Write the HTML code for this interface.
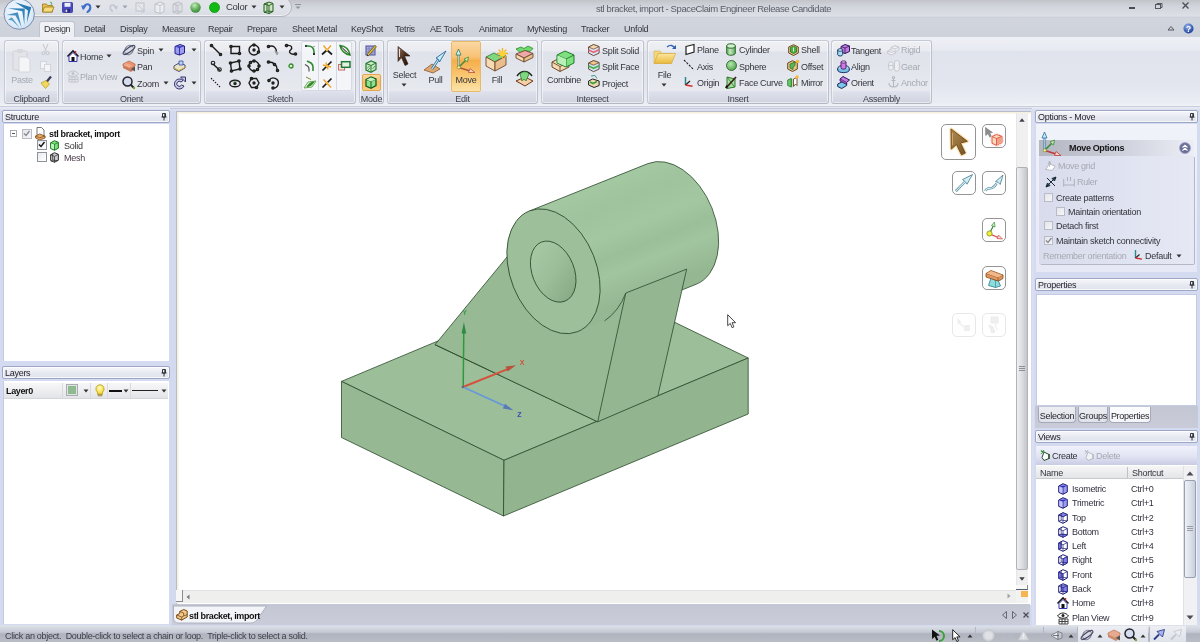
<!DOCTYPE html>
<html><head><meta charset="utf-8"><title>SpaceClaim</title>
<style>
*{box-sizing:border-box;margin:0;padding:0}
html,body{width:1200px;height:642px;overflow:hidden}
body{position:relative;background:#d5dbee;font-family:"Liberation Sans",sans-serif;font-size:9px;color:#2a2a2e}
.a{position:absolute}
svg{overflow:visible}
.t{position:absolute;white-space:nowrap;line-height:10px;font-size:9px;color:#33353c;letter-spacing:-0.28px}
.dis{color:#a6a9b2}
.b{font-weight:bold;letter-spacing:-0.37px}
.c{transform:translateX(-50%)}
.grp{position:absolute;top:40px;height:64px;border:1px solid #c6cad4;border-right-color:#bcc0ca;border-bottom-color:#b4b8c3;border-radius:3px;background:linear-gradient(#eef0f4,#e9ebf0 16%,#dfe2ea 18%,#e7e9ef 80%,#dfe2ec 81%,#cfd3df);box-shadow:inset 0 0 0 1px rgba(255,255,255,.5)}
.ph{position:absolute;height:14px;border:1px solid #9fa7c6;border-radius:2px;background:linear-gradient(#f6f7fb,#e6e8f1 60%,#dfe2ec);box-shadow:inset 0 0 0 1px rgba(255,255,255,.7)}

#app{position:absolute;left:0;top:0;width:1200px;height:642px;overflow:hidden;will-change:transform}

</style></head><body>
<div id="app">
<div class="a" style="left:0px;top:0px;width:1200px;height:18px;background:linear-gradient(#c2c4ca,#d1d4da 35%,#dddfe6 88%,#c8ccd5)"></div>
<div class="a" style="left:0px;top:18px;width:1200px;height:20px;background:linear-gradient(#d1d5de,#cdd1da)"></div>
<div class="a" style="left:22px;top:-3px;width:270px;height:19.5px;border:1px solid #b4b7c0;border-radius:10px;background:linear-gradient(#e2e4e9,#e0e3e9 55%,#d9dce3);box-shadow:inset 0 -1px 0 rgba(255,255,255,.6)"></div>
<svg class="a" style="left:3px;top:-2px" width="32" height="32" viewBox="0 0 32 32"><defs><radialGradient id="lg" cx="45%" cy="40%" r="65%"><stop offset="0" stop-color="#f4f9ff"/><stop offset=".7" stop-color="#dfecf9"/><stop offset="1" stop-color="#c4dcf2"/></radialGradient></defs>
<circle cx="16.200" cy="16.100" r="15.200" fill="url(#lg)" stroke="#7f8ead" stroke-width="1"/>
<path d="M12 4.200L28.200 9.300L23.800 25L25 12.500z" fill="#2878b2"/>
<path d="M5 10.300L21.800 10.600L21.300 27L19.300 13.200z" fill="#3484ba"/>
<path d="M3.500 17L14.800 14.300L18.500 29L12.500 17.500z" fill="#4590c2"/>
<path d="M5 21.800L8.800 19.300L16.500 29.500L9 22.500z" fill="#5a9cc8"/></svg>
<svg class="a" style="left:42px;top:1px" width="12" height="12" viewBox="0 0 12 12"><path d="M0.5 3h4l1 1.5h5v6.5h-10z" fill="#e8c24e" stroke="#9a7a1c" stroke-width=".8"/><path d="M0.5 11l2-5h9.5l-2 5z" fill="#f6dc7c" stroke="#9a7a1c" stroke-width=".8"/><path d="M8 1l2 1-1 2" stroke="#5a7" fill="none"/></svg>
<svg class="a" style="left:62px;top:2px" width="11" height="11" viewBox="0 0 11 11"><rect x=".5" y=".5" width="10" height="10" rx=".8" fill="#4848c0" stroke="#34349a" stroke-width=".8"/><rect x="2.500" y=".8" width="6" height="4" fill="#eef0fa"/><rect x="3" y="7" width="5" height="3.500" fill="#2a2a7a"/><rect x="3.600" y="7.600" width="1.600" height="2.500" fill="#e4e6f4"/></svg>
<svg class="a" style="left:81px;top:2px" width="11" height="11" viewBox="0 0 11 11"><path d="M3 5.500C3.500 1.500 9 1 9.300 5C9.500 7.500 8 9 6.500 10" fill="none" stroke="#3d6fd0" stroke-width="2.100" stroke-linecap="round"/><path d="M0 3.500l5.500 .3-3.500 4.500z" fill="#3d6fd0"/></svg>
<svg class="a" style="left:95px;top:5px" width="6" height="4" viewBox="0 0 6 4"><path d="M0.5 0.5h5l-2.5 3z" fill="#333"/></svg>
<svg class="a" style="left:108px;top:3px" width="10" height="9" viewBox="0 0 10 9"><path d="M7.500 4.500C7 1.500 2.500 1 2.200 4.200C2 6 3 7.200 4.200 8" fill="none" stroke="#c3c6ce" stroke-width="1.700" stroke-linecap="round"/><path d="M10 3l-4.500 .3 3 3.700z" fill="#c3c6ce"/></svg>
<svg class="a" style="left:122px;top:5px" width="6" height="4" viewBox="0 0 6 4"><path d="M0.5 0.5h5l-2.5 3z" fill="#a0a3ab"/></svg>
<svg class="a" style="left:135px;top:2px" width="11" height="11" viewBox="0 0 11 11"><rect x="1" y="1" width="8" height="8" fill="#e4e6ea" stroke="#bfc2c9"/><path d="M3 3l6 6M9 7v3h-3" stroke="#c5c8cf" fill="none"/></svg>
<svg class="a" style="left:154px;top:1px" width="11" height="13" viewBox="0 0 11 13"><path d="M1 3l5-2 4 1.5v8l-4 2-5-1.5z" fill="#ecedf0" stroke="#b5b8bf" stroke-width=".8"/><path d="M6 4.5v8M1 3l5 1.5 4-2" stroke="#b5b8bf" stroke-width=".7" fill="none"/></svg>
<svg class="a" style="left:172px;top:1px" width="11" height="13" viewBox="0 0 11 13"><path d="M1 3l5-2 4 1.5v8l-4 2-5-1.5z" fill="#dfe1e5" stroke="#b5b8bf" stroke-width=".8"/><path d="M6 4.5v8M1 3l5 1.5 4-2M4 2v8l-3 1.5M4 10l6 .5" stroke="#b5b8bf" stroke-width=".7" fill="none"/></svg>
<svg class="a" style="left:190px;top:2px" width="11" height="11" viewBox="0 0 11 11"><defs><radialGradient id="gs" cx="40%" cy="30%" r="70%"><stop offset="0" stop-color="#c8eac4"/><stop offset=".5" stop-color="#6fb868"/><stop offset="1" stop-color="#3b8a3a"/></radialGradient></defs><circle cx="5.5" cy="5.5" r="5.2" fill="url(#gs)"/></svg>
<svg class="a" style="left:209px;top:2px" width="11" height="11" viewBox="0 0 11 11"><circle cx="5.5" cy="5.5" r="5.2" fill="#14b914"/><circle cx="5.5" cy="5.5" r="4.9" fill="none" stroke="#0c9a10" stroke-width=".7"/></svg>
<div class="t " style="left:226px;top:2px;font-size:9.5px;color:#33353b">Color</div>
<svg class="a" style="left:251px;top:5px" width="6" height="4" viewBox="0 0 6 4"><path d="M0.5 0.5h5l-2.5 3z" fill="#333"/></svg>
<svg class="a" style="left:263px;top:1px" width="11" height="13" viewBox="0 0 11 13"><path d="M1 3l5-2 4 1.5v8l-4 2-5-1.5z" fill="#cfe6c4" stroke="#1f5a1c" stroke-width="1"/><path d="M6 4.5v8M1 3l5 1.5 4-2M4 2v8l-3 1.5M4 10l6 .5" stroke="#1f5a1c" stroke-width=".9" fill="none"/></svg>
<svg class="a" style="left:279px;top:5px" width="6" height="4" viewBox="0 0 6 4"><path d="M0.5 0.5h5l-2.5 3z" fill="#333"/></svg>
<svg class="a" style="left:295px;top:4px" width="6" height="6" viewBox="0 0 6 6"><path d="M0 .5h6" stroke="#8f939c" stroke-width="1"/><path d="M.5 2.5h5l-2.5 2.5z" fill="#8f939c"/></svg>
<div class="t " style="left:596px;top:4px;font-size:9.500px;letter-spacing:-0.4px;color:#5a5d68">stl bracket, import - SpaceClaim Engineer Release Candidate</div>
<div class="a" style="left:1129px;top:7px;width:6px;height:2px;background:#4a4d57"></div>
<svg class="a" style="left:1155px;top:3px" width="8" height="7" viewBox="0 0 8 7"><rect x=".5" y="1.5" width="5" height="4" fill="none" stroke="#555862"/><path d="M2 1.5v-1h5v4h-1" fill="none" stroke="#555862"/></svg>
<svg class="a" style="left:1182px;top:2px" width="7" height="7" viewBox="0 0 7 7"><path d="M.5 .5l6 6M6.500 .5l-6 6" stroke="#4a4d57" stroke-width="1.3"/></svg>
<svg class="a" style="left:1167px;top:25px" width="8" height="6" viewBox="0 0 8 6"><path d="M1 5l3-3.500 3 3.500z" fill="none" stroke="#55585f" stroke-width="1"/></svg>
<svg class="a" style="left:1183px;top:23px" width="11" height="11" viewBox="0 0 11 11"><defs><radialGradient id="hg" cx="40%" cy="30%" r="70%"><stop offset="0" stop-color="#8fb2ee"/><stop offset="1" stop-color="#1d3f9d"/></radialGradient></defs><circle cx="5.500" cy="5.500" r="5" fill="url(#hg)"/><text x="5.500" y="8.600" font-size="8.500" font-weight="bold" fill="#fff" text-anchor="middle" font-family="Liberation Sans, sans-serif">?</text></svg>
<div class="a" style="left:39px;top:21px;width:36px;height:18px;border:1px solid #c0c4ce;border-bottom:none;border-radius:3px 3px 0 0;background:linear-gradient(#f1f2f6,#eceef3)"></div>
<div class="t " style="left:44px;top:24px;color:#34363d">Design</div>
<div class="t " style="left:84px;top:24px;color:#34363d">Detail</div>
<div class="t " style="left:120px;top:24px;color:#34363d">Display</div>
<div class="t " style="left:162px;top:24px;color:#34363d">Measure</div>
<div class="t " style="left:208px;top:24px;color:#34363d">Repair</div>
<div class="t " style="left:247px;top:24px;color:#34363d">Prepare</div>
<div class="t " style="left:292px;top:24px;color:#34363d">Sheet Metal</div>
<div class="t " style="left:351px;top:24px;color:#34363d">KeyShot</div>
<div class="t " style="left:395px;top:24px;color:#34363d">Tetris</div>
<div class="t " style="left:430px;top:24px;color:#34363d">AE Tools</div>
<div class="t " style="left:479px;top:24px;color:#34363d">Animator</div>
<div class="t " style="left:527px;top:24px;color:#34363d">MyNesting</div>
<div class="t " style="left:581px;top:24px;color:#34363d">Tracker</div>
<div class="t " style="left:624px;top:24px;color:#34363d">Unfold</div>
<div class="a" style="left:0px;top:37px;width:1200px;height:69px;background:linear-gradient(#eef0f5,#e7eaf1 19%,#dfe3ec 21%,#e3e6ef 70%,#eaedf4 96%,#f2f4f8)"></div>
<div class="a" style="left:0px;top:106px;width:1200px;height:1px;background:#c9cdd9"></div>
<div class="grp" style="left:4px;width:55px"></div>
<div class="t c" style="left:31.5px;top:94px;color:#40424a">Clipboard</div>
<div class="grp" style="left:62px;width:139px"></div>
<div class="t c" style="left:131.5px;top:94px;color:#40424a">Orient</div>
<div class="grp" style="left:204px;width:152px"></div>
<div class="t c" style="left:280.0px;top:94px;color:#40424a">Sketch</div>
<div class="grp" style="left:359px;width:25px"></div>
<div class="t c" style="left:371.5px;top:94px;color:#40424a">Mode</div>
<div class="grp" style="left:387px;width:151px"></div>
<div class="t c" style="left:462.5px;top:94px;color:#40424a">Edit</div>
<div class="grp" style="left:541px;width:103px"></div>
<div class="t c" style="left:592.5px;top:94px;color:#40424a">Intersect</div>
<div class="grp" style="left:647px;width:182px"></div>
<div class="t c" style="left:738.0px;top:94px;color:#40424a">Insert</div>
<div class="grp" style="left:831px;width:101px"></div>
<div class="t c" style="left:881.5px;top:94px;color:#40424a">Assembly</div>
<svg class="a" style="left:12px;top:48px" width="20" height="26" viewBox="0 0 20 26"><rect x="1" y="3" width="14" height="19" rx="1.500" fill="#e3e4e8" stroke="#cfd1d7"/><rect x="5" y="1" width="6" height="4" rx="1" fill="#d6d8de"/><path d="M7 9h8l3 3v12h-11z" fill="#f4f5f7" stroke="#d4d6dc"/></svg>
<div class="t c dis" style="left:22px;top:75px;">Paste</div>
<svg class="a" style="left:41px;top:44px" width="9" height="11" viewBox="0 0 9 11"><path d="M2 0l3 7M7 0l-3 7" stroke="#c4c6cd" stroke-width="1"/><circle cx="2.500" cy="9" r="1.600" fill="none" stroke="#c4c6cd"/><circle cx="6.500" cy="9" r="1.600" fill="none" stroke="#c4c6cd"/></svg>
<svg class="a" style="left:40px;top:61px" width="12" height="11" viewBox="0 0 12 11"><rect x=".5" y=".5" width="6" height="7" fill="#f3f4f6" stroke="#d3d5db"/><rect x="4.500" y="3.500" width="6" height="7" fill="#f3f4f6" stroke="#d3d5db"/></svg>
<svg class="a" style="left:40px;top:76px" width="12" height="13" viewBox="0 0 12 13"><path d="M11 0.500l-5 6" stroke="#3b3b55" stroke-width="2.200"/><path d="M1 7l5-2.500 3.500 3.500-4 4.500z" fill="#f2d95c" stroke="#b59a22" stroke-width=".7"/></svg>
<svg class="a" style="left:67px;top:50px" width="12" height="12" viewBox="0 0 12 12"><path d="M0.500 6.500l5.500-5.500 5.500 5.500" fill="none" stroke="#1a1a1a" stroke-width="1.600"/><path d="M2 6.500v5h8v-5l-4-4z" fill="#fff" stroke="#3434a8" stroke-width="1"/><rect x="4.500" y="7" width="3" height="4" fill="#111"/><path d="M8.500 1v3" stroke="#a33" stroke-width="1.400"/></svg>
<div class="t " style="left:80px;top:52px;">Home</div>
<svg class="a" style="left:106px;top:54px" width="6" height="4" viewBox="0 0 6 4"><path d="M0.5 0.5h5l-2.5 3z" fill="#333"/></svg>
<svg class="a" style="left:67px;top:70px" width="12" height="12" viewBox="0 0 12 12"><path d="M0.500 4c3-4 8-4 11 0c-3 3-8 3-11 0z" fill="none" stroke="#c2c4cb"/><circle cx="6" cy="3.500" r="1.500" fill="#c2c4cb"/><path d="M2 7h9v5h-9zM2 9.500h9M5 7v5M8 7v5" fill="none" stroke="#c2c4cb"/></svg>
<div class="t dis" style="left:80px;top:72px;">Plan View</div>
<svg class="a" style="left:122px;top:44px" width="14" height="12" viewBox="0 0 14 12"><ellipse cx="7" cy="6" rx="4" ry="5" fill="#d9dbe6" stroke="#6e7186" stroke-width="1" transform="rotate(35 7 6)"/><ellipse cx="7" cy="6" rx="7" ry="2.200" fill="none" stroke="#4a4d63" stroke-width="1.200" transform="rotate(-35 7 6)"/></svg>
<div class="t " style="left:137px;top:46px;">Spin</div>
<svg class="a" style="left:158px;top:48px" width="6" height="4" viewBox="0 0 6 4"><path d="M0.5 0.5h5l-2.5 3z" fill="#333"/></svg>
<svg class="a" style="left:122px;top:60px" width="14" height="12" viewBox="0 0 14 12"><path d="M1 4l6-3 6 3v2l-5 3-7-3z" fill="#e8936e" stroke="#b8623f" stroke-width=".7"/><path d="M1 6l7 3 5-3v3l-4 3-8-4z" fill="#c97a5b"/><path d="M9 9l4-2.500v5z" fill="#555"/><path d="M2 4.500l6 2.500M3.500 3.500l6 2.500" stroke="#f7c2a8" stroke-width=".8"/></svg>
<div class="t " style="left:137px;top:62px;">Pan</div>
<svg class="a" style="left:122px;top:76px" width="14" height="13" viewBox="0 0 14 13"><circle cx="5.500" cy="5.500" r="4.500" fill="#d5dcee" stroke="#22232b" stroke-width="1.500"/><path d="M8.500 8.500l3.500 3.500" stroke="#22232b" stroke-width="2"/><circle cx="12" cy="12" r="1.200" fill="#7aa52c"/></svg>
<div class="t " style="left:137px;top:79px;">Zoom</div>
<svg class="a" style="left:163px;top:81px" width="6" height="4" viewBox="0 0 6 4"><path d="M0.5 0.5h5l-2.5 3z" fill="#333"/></svg>
<svg class="a" style="left:174px;top:44px" width="11" height="11" viewBox="0 0 11 11"><path d="M1 2.500l5-2 4.500 1.500v7l-5 2-4.500-1.500z" fill="#9c9cf0" stroke="#1e1e8a" stroke-width="1"/><path d="M1 2.500l4.500 1.500 5-2z" fill="#2a2ab0"/><path d="M5.500 4v7" stroke="#1e1e8a" stroke-width=".8"/></svg>
<svg class="a" style="left:191px;top:48px" width="6" height="4" viewBox="0 0 6 4"><path d="M0.5 0.5h5l-2.5 3z" fill="#333"/></svg>
<svg class="a" style="left:173px;top:60px" width="13" height="12" viewBox="0 0 13 12"><path d="M1 6l5-3 6 2v3l-6 3.500-5-2.500z" fill="#e9e4c8" stroke="#3d3f6d" stroke-width=".9"/><path d="M6 1h4v4h-4z" fill="#bcd0f2" stroke="#3a4fa0" stroke-width=".8"/><path d="M1 8l5 2.500 6-3" fill="none" stroke="#c9a73a" stroke-width="1"/></svg>
<svg class="a" style="left:173px;top:76px" width="13" height="13" viewBox="0 0 13 13"><path d="M10 4.500a5 5 0 1 0 1 5.500l-2.500-1a2.500 2.500 0 1 1-.5-3z" fill="#c6c8e6" stroke="#34366e" stroke-width="1"/><path d="M7.500 1h5v5z" fill="#c6c8e6" stroke="#34366e" stroke-width="1"/></svg>
<svg class="a" style="left:191px;top:81px" width="6" height="4" viewBox="0 0 6 4"><path d="M0.5 0.5h5l-2.5 3z" fill="#333"/></svg>
<svg class="a" style="left:210px;top:44px" width="12" height="12" viewBox="0 0 12 12"><g fill="none" stroke="#1c1c1c" stroke-width="1.400" stroke-linecap="round"><path d="M1.500 1.500l9 9"/><circle cx="1.5" cy="1.5" r="1.1" fill="#2e8b2e"/><circle cx="10.5" cy="10.5" r="1.1" fill="#2e8b2e"/></g></svg>
<svg class="a" style="left:228.5px;top:44px" width="12" height="12" viewBox="0 0 12 12"><g fill="none" stroke="#1c1c1c" stroke-width="1.400" stroke-linecap="round"><path d="M2 2.500h8.500v7h-8.500z"/><circle cx="2" cy="2.5" r="1.1" fill="#2e8b2e"/><circle cx="10.5" cy="9.5" r="1.1" fill="#2e8b2e"/></g></svg>
<svg class="a" style="left:248px;top:44px" width="12" height="12" viewBox="0 0 12 12"><g fill="none" stroke="#1c1c1c" stroke-width="1.400" stroke-linecap="round"><circle cx="6" cy="6" r="5"/><circle cx="6" cy="6" r="1" fill="#1c1c1c"/><circle cx="6" cy="1" r="1.1" fill="#2e8b2e"/><circle cx="10.5" cy="8" r="1.1" fill="#2e8b2e"/></g></svg>
<svg class="a" style="left:266.5px;top:44px" width="12" height="12" viewBox="0 0 12 12"><g fill="none" stroke="#1c1c1c" stroke-width="1.400" stroke-linecap="round"><path d="M1.500 2.500c5-1.500 8 1 8 6"/><circle cx="1.5" cy="2.5" r="1.1" fill="#2e8b2e"/><path d="M8 7l2 4 1-2z" stroke="#8a9a92" stroke-width=".8" fill="#aab"/></g></svg>
<svg class="a" style="left:285px;top:44px" width="12" height="12" viewBox="0 0 12 12"><g fill="none" stroke="#1c1c1c" stroke-width="1.400" stroke-linecap="round"><path d="M1.500 1.500c6-1 6 3 4 4.500s-1 5 5 4"/><circle cx="1.5" cy="1.5" r="1.1" fill="#2e8b2e"/><circle cx="10.5" cy="10" r="1.1" fill="#2e8b2e"/></g></svg>
<svg class="a" style="left:210px;top:60px" width="12" height="12" viewBox="0 0 12 12"><g fill="none" stroke="#1c1c1c" stroke-width="1.400" stroke-linecap="round"><path d="M3 4l7 6.500"/><circle cx="3" cy="3" r="1.800" stroke-width="1.100"/><circle cx="9.500" cy="9.500" r="1.800" stroke-width="1.100"/></g></svg>
<svg class="a" style="left:228.5px;top:60px" width="12" height="12" viewBox="0 0 12 12"><g fill="none" stroke="#1c1c1c" stroke-width="1.400" stroke-linecap="round"><path d="M1.500 3l8.500-2 1 8-8.500 2z"/><circle cx="1.5" cy="3" r="1.1" fill="#2e8b2e"/><circle cx="10" cy="1" r="1.1" fill="#2e8b2e"/><circle cx="11" cy="9" r="1.1" fill="#2e8b2e"/><circle cx="2.5" cy="11" r="1.1" fill="#2e8b2e"/></g></svg>
<svg class="a" style="left:248px;top:60px" width="12" height="12" viewBox="0 0 12 12"><g fill="none" stroke="#1c1c1c" stroke-width="1.400" stroke-linecap="round"><circle cx="6" cy="6" r="5"/><circle cx="6" cy="1" r="1.1" fill="#2e8b2e"/><circle cx="1" cy="6" r="1.1" fill="#2e8b2e"/><circle cx="11" cy="6" r="1.1" fill="#2e8b2e"/><circle cx="6" cy="11" r="1.1" fill="#2e8b2e"/><circle cx="2.5" cy="2.5" r="1.1" fill="#2e8b2e"/><circle cx="9.5" cy="9.5" r="1.1" fill="#2e8b2e"/></g></svg>
<svg class="a" style="left:266.5px;top:60px" width="12" height="12" viewBox="0 0 12 12"><g fill="none" stroke="#1c1c1c" stroke-width="1.400" stroke-linecap="round"><path d="M1.500 2c5 0 8.500 3 9 8.500"/><circle cx="1.5" cy="2" r="1.1" fill="#2e8b2e"/><circle cx="7.5" cy="4.5" r="1.1" fill="#2e8b2e"/><circle cx="10.5" cy="10.5" r="1.1" fill="#2e8b2e"/></g></svg>
<svg class="a" style="left:288px;top:63px" width="6" height="6" viewBox="0 0 6 6"><circle cx="3" cy="3" r="2" fill="#dff0c8" stroke="#2e8b2e" stroke-width="1.300"/></svg>
<svg class="a" style="left:210px;top:77px" width="12" height="12" viewBox="0 0 12 12"><g fill="none" stroke="#1c1c1c" stroke-width="1.400" stroke-linecap="round"><path d="M1.500 1.500l9 9" stroke-dasharray=".2 2.600"/></g></svg>
<svg class="a" style="left:228.5px;top:77px" width="12" height="12" viewBox="0 0 12 12"><g fill="none" stroke="#1c1c1c" stroke-width="1.400" stroke-linecap="round"><ellipse cx="6" cy="6.500" rx="5.200" ry="3.300"/><circle cx="6" cy="6.5" r="1" fill="#1c1c1c"/><path d="M6 3v3" stroke="#2e8b2e" stroke-width=".8"/></g></svg>
<svg class="a" style="left:248px;top:77px" width="12" height="12" viewBox="0 0 12 12"><g fill="none" stroke="#1c1c1c" stroke-width="1.400" stroke-linecap="round"><path d="M3.500 1.500h5l2.500 4.500-2.500 4.500h-5l-2.500-4.500z"/><circle cx="6" cy="6" r="1" fill="#1c1c1c"/><circle cx="8.5" cy="10.5" r="1.1" fill="#2e8b2e"/><circle cx="3.5" cy="1.5" r="1.1" fill="#2e8b2e"/></g></svg>
<svg class="a" style="left:266.5px;top:77px" width="12" height="12" viewBox="0 0 12 12"><g fill="none" stroke="#1c1c1c" stroke-width="1.400" stroke-linecap="round"><path d="M2 3.500a5 5 0 1 1 4 7.500"/><circle cx="6" cy="6" r="1" fill="#1c1c1c"/><circle cx="2" cy="3.5" r="1.1" fill="#2e8b2e"/><circle cx="6" cy="11" r="1.1" fill="#2e8b2e"/></g></svg>
<div class="a" style="left:301px;top:41px;width:51px;height:50px;background:rgba(248,249,252,.75);border:1px solid #d7dae2;border-radius:2px"></div>
<div class="a" style="left:318px;top:42px;width:1px;height:48px;background:#d5d8e0"></div>
<div class="a" style="left:336px;top:42px;width:1px;height:48px;background:#d5d8e0"></div>
<svg class="a" style="left:304px;top:44px" width="12" height="12" viewBox="0 0 12 12"><path d="M1 2h3c4 0 6 2.500 6 6v3" fill="none" stroke="#2e8b2e" stroke-width="1.600"/><path d="M1 2h2M10 9v2" stroke="#1c1c1c" stroke-width="1.600"/><path d="M10 2v1M9 2.500h2" stroke="#999" stroke-width=".7"/></svg>
<svg class="a" style="left:304px;top:60px" width="12" height="12" viewBox="0 0 12 12"><path d="M3 1l4 2c1.500 1 2 2 2 4v4" fill="none" stroke="#2e8b2e" stroke-width="1.600"/><path d="M1 4.500l2.500 1.500c1 .8 1.500 1.500 1.500 3v2.500" fill="none" stroke="#555" stroke-width="1.200"/></svg>
<svg class="a" style="left:303px;top:76px" width="14" height="14" viewBox="0 0 14 14"><path d="M1 12l4-6 8-1-4 6z" fill="#e8f4dc" stroke="#5aa04a" stroke-width=".9"/><path d="M3.500 11c2-4 5-5.500 8-5.500c-2 4-5 5.500-8 5.500z" fill="#2e8b2e"/><path d="M3 1l5 2.500" stroke="#7a8a3a" stroke-width="1"/></svg>
<svg class="a" style="left:321px;top:44px" width="12" height="12" viewBox="0 0 12 12"><path d="M1 10.500l5-4.500 5 4.500" stroke="#1c1c1c" stroke-width="1.700" fill="none"/><path d="M2.500 1.500l3.500 4.500 4-4.500" stroke="#f0a020" stroke-width="1.300" fill="none"/><circle cx="6" cy="6" r="1.300" fill="#f6b63a"/></svg>
<svg class="a" style="left:321px;top:60px" width="12" height="12" viewBox="0 0 12 12"><path d="M1.500 10.500l9-9" stroke="#1c1c1c" stroke-width="1.700" fill="none"/><path d="M2 5l8 2M5 2.500l2 7" stroke="#f0a020" stroke-width="1.300" fill="none"/><circle cx="6" cy="6" r="1.300" fill="#f6b63a"/></svg>
<svg class="a" style="left:321px;top:77px" width="12" height="12" viewBox="0 0 12 12"><path d="M1.500 10.500l9-9" stroke="#1c1c1c" stroke-width="1.700" fill="none"/><path d="M2.500 2.500l7.500 8" stroke="#f0a020" stroke-width="1.300" fill="none"/><circle cx="6" cy="6" r="1.300" fill="#f6b63a"/></svg>
<svg class="a" style="left:338.5px;top:44px" width="12" height="12" viewBox="0 0 12 12"><path d="M1 1.500c5 .5 9 4 10 9.500c-5-1-9-4.500-10-9.500z" fill="#f1f6ec" stroke="#2e8b2e" stroke-width="1.500"/><path d="M1.500 2c3 3.500 6 6 9.500 8.500" stroke="#333" stroke-width=".7"/></svg>
<svg class="a" style="left:338.0px;top:61px" width="13" height="10" viewBox="0 0 13 10"><rect x=".6" y="3.500" width="6" height="5.500" fill="#fbeaea" stroke="#c05a5a" stroke-width=".9"/><rect x="3.500" y=".7" width="8.500" height="5.600" fill="#e4f1e0" stroke="#22793a" stroke-width="1.500"/></svg>
<svg class="a" style="left:365px;top:44px" width="12" height="12" viewBox="0 0 12 12"><rect x="1" y="2" width="9" height="9" fill="#a9add8" stroke="#4a4e9a"/><path d="M1 5h9M1 8h9M4 2v9M7 2v9" stroke="#6b6fb5" stroke-width=".6"/><path d="M2 10.500l8-9 1.500 1.200-8 9z" fill="#e5c13a" stroke="#5a4a12" stroke-width=".7"/><path d="M2 10.500l.2 1.800 1.500-.5z" fill="#222"/></svg>
<svg class="a" style="left:365px;top:60px" width="12" height="13" viewBox="0 0 12 13"><path d="M1 3.500l5-2.500 5 2v6.500l-5 2.800-5-2.300z" fill="#cfe9c8" stroke="#1f7a2a" stroke-width="1.200"/><path d="M1 3.500l5 2 5-2.500M6 5.500v6.500" stroke="#1f7a2a" stroke-width="1" fill="none"/><path d="M2 8.500l3-3M2.500 10.500l3-3M7.500 9l2.500-3" stroke="#1f7a2a" stroke-width=".7"/></svg>
<div class="a" style="left:362px;top:74px;width:19px;height:17px;border:1px solid #e2a64e;border-radius:2px;background:linear-gradient(#fbd9a0,#f6be68 50%,#f9cf85)"></div>
<svg class="a" style="left:365px;top:76px" width="12" height="13" viewBox="0 0 12 13"><path d="M1 3.500l5-2.500 5 2v6.500l-5 2.800-5-2.300z" fill="#8fe08f" stroke="#14601c" stroke-width="1.300"/><path d="M1 3.500l5 2 5-2.500M6 5.500v6.500" stroke="#14601c" stroke-width="1" fill="none"/><path d="M1.500 3.800l4.500 1.800 4.500-2-4.500-2z" fill="#c9f2c4"/></svg>
<svg class="a" style="left:397px;top:46px" width="14" height="21" viewBox="0 0 14 21"><defs><linearGradient id="sa" x1="0" y1="0" x2="1" y2="1"><stop offset="0" stop-color="#9a7a66"/><stop offset=".5" stop-color="#4a2c1c"/><stop offset="1" stop-color="#1a0c06"/></linearGradient></defs><path d="M1 0.500l12 9.500h-5.500l3.500 8-3 1.500-3.500-8-3.500 4z" fill="url(#sa)" stroke="#2a1a10" stroke-width=".6"/><path d="M2.500 3v8" stroke="#e8e0da" stroke-width="1"/></svg>
<div class="t c" style="left:404.5px;top:70px;">Select</div>
<svg class="a" style="left:401px;top:83px" width="6" height="4" viewBox="0 0 6 4"><path d="M0.5 0.5h5l-2.5 3z" fill="#333"/></svg>
<svg class="a" style="left:423px;top:50px" width="24" height="23" viewBox="0 0 24 23"><path d="M1 20l8-6 8 5-7 4z" fill="#dca772" stroke="#8a5a2a" stroke-width=".8"/><path d="M9 19l8-12" stroke="#2a6a9a" stroke-width="2.400"/><path d="M9 19l8-12" stroke="#bfeaf6" stroke-width="1.200"/><path d="M23 1l-10 7 2.500 1.500 1 2.500z" fill="#c4ecf6" stroke="#2a6a9a" stroke-width=".9"/></svg>
<div class="t c" style="left:435.5px;top:75px;">Pull</div>
<div class="a" style="left:451px;top:41px;width:30px;height:51px;border:1px solid #e9b96a;border-radius:2px;background:linear-gradient(#fbd8a2,#f8c277 30%,#f6ae4c 38%,#f9c874 70%,#fbe3a8)"></div>
<svg class="a" style="left:455px;top:48px" width="22" height="25" viewBox="0 0 22 25"><path d="M3.500 19v-14" stroke="#2a7a6a" stroke-width="1.800"/><path d="M3.500 19v-14" stroke="#d8f4f0" stroke-width=".7"/><path d="M3.500 1l2.500 6h-5z" fill="#d8f4f0" stroke="#2a7a6a" stroke-width=".8"/><path d="M4 19l7-7" stroke="#4a8a3a" stroke-width="1.600"/><path d="M13.500 9l-1 5-3.500-3z" fill="#c8eab0" stroke="#4a8a3a" stroke-width=".8"/><path d="M4 19.500l11 3.500" stroke="#b0553a" stroke-width="1.500"/><path d="M20 24.500l-6.500 0 1.500-4z" fill="#f6d4c8" stroke="#b0553a" stroke-width=".8"/><circle cx="3.800" cy="19.300" r="1.600" fill="#f2f2a0" stroke="#7a8a2a" stroke-width=".7"/></svg>
<div class="t c" style="left:466px;top:75px;">Move</div>
<svg class="a" style="left:485px;top:48px" width="23" height="24" viewBox="0 0 23 24"><path d="M1 9l8-4 5 2.500 5-1.500 2 2-12 6z" fill="#7fd87f" stroke="#2a7a2a" stroke-width=".8"/><path d="M1 9l9 5v9l-9-5z" fill="#f7d9b4" stroke="#6a4a2a" stroke-width=".9"/><path d="M10 14l11-6v9l-11 6z" fill="#e9bd8e" stroke="#6a4a2a" stroke-width=".9"/><g stroke="#f0b020" stroke-width="1.300"><path d="M17.500 0v11M12 5.500h11M13.600 1.600l7.800 7.800M21.400 1.600l-7.800 7.800"/></g><circle cx="17.500" cy="5.500" r="2.800" fill="#fbd23a"/></svg>
<div class="t c" style="left:497px;top:75px;">Fill</div>
<svg class="a" style="left:515px;top:45px" width="19" height="18" viewBox="0 0 19 18"><path d="M1 4l5-2 3 1.500 4-2.500 5 2.500-3 3-4-.5-4 3z" fill="#6fd86f" stroke="#2a8a2a" stroke-width=".8"/><path d="M1 9l8 4 9-4.500-8-3z" fill="#f0a8a8" stroke="#6a3a2a" stroke-width=".8"/><path d="M1 9v4l8 4v-4z" fill="#f7d9b4" stroke="#6a4a2a" stroke-width=".9"/><path d="M9 13l9-4.500v4l-9 4.500z" fill="#e9bd8e" stroke="#6a4a2a" stroke-width=".9"/></svg>
<svg class="a" style="left:515px;top:70px" width="19" height="17" viewBox="0 0 19 17"><path d="M1 11l9-4 8 4-8 5z" fill="#f7d0a8" stroke="#6a3a1a" stroke-width="1"/><path d="M2 6c4-6 11-6 15 0" fill="none" stroke="#222" stroke-width="1.500"/><path d="M5 4c3-3 7-3 9 0l-3 7c-1-2-3-2-4 0z" fill="#7fd87f" stroke="#2a7a2a" stroke-width=".8"/></svg>
<svg class="a" style="left:551px;top:50px" width="25" height="22" viewBox="0 0 25 22"><path d="M1 12l8-4 9 4v5l-9 4.500-8-4.500z" fill="#f7d9b4" stroke="#6a4a2a" stroke-width="1"/><path d="M9 16.500v5M1 12l8 4.500 9-4.500" fill="none" stroke="#6a4a2a" stroke-width=".9"/><path d="M6 5l8-4 9 4v8l-8 4-9-4z" fill="#7fe07f" stroke="#1f7a2a" stroke-width="1"/><path d="M6 5l9 4 8-4M15 9v8" fill="none" stroke="#1f7a2a" stroke-width=".9"/><path d="M6.500 5.200l8.500 3.800v7.500l-8.500-3.800z" fill="#b8f0b8"/></svg>
<div class="t c" style="left:564px;top:75px;">Combine</div>
<svg class="a" style="left:588px;top:44px" width="12" height="12" viewBox="0 0 12 12"><path d="M.6 3l5-2.400 5.500 2v6.500l-5.500 2.500-5-2.500z" fill="#d9e6f6" stroke="#5a3a2a" stroke-width=".9"/><path d="M.6 3l5 2.200 5.500-2.600-5.500-2z" fill="#f4d9b0" stroke="#5a3a2a" stroke-width=".7"/><path d="M.6 6l5 2.300 5.500-2.500" fill="none" stroke="#e86a7a" stroke-width="1.800"/></svg>
<div class="t " style="left:602px;top:46px;">Split Solid</div>
<svg class="a" style="left:588px;top:60px" width="12" height="12" viewBox="0 0 12 12"><path d="M.6 3l5-2.400 5.500 2v6.500l-5.500 2.500-5-2.500z" fill="#cfe6f8" stroke="#5a3a2a" stroke-width=".9"/><path d="M.6 3l5 2.200 5.500-2.600-5.500-2z" fill="#f0c48a" stroke="#5a3a2a" stroke-width=".7"/><path d="M.6 6l5 2.300 5.500-2.500" fill="none" stroke="#4ab04a" stroke-width="1.800"/></svg>
<div class="t " style="left:602px;top:62px;">Split Face</div>
<svg class="a" style="left:588px;top:75px" width="12" height="13" viewBox="0 0 12 13"><path d="M.6 6l4-2 6.500 2v4.500l-5 2-5.500-2.500z" fill="#f0d8b4" stroke="#222" stroke-width="1"/><path d="M2 7l3 1.500 4-2" fill="none" stroke="#3aa03a" stroke-width="1.600"/><path d="M3 1l4-.5 2 3" fill="none" stroke="#3a9a8a" stroke-width="1"/></svg>
<div class="t " style="left:602px;top:79px;">Project</div>
<svg class="a" style="left:653px;top:44px" width="25" height="21" viewBox="0 0 25 21"><defs><linearGradient id="fo" x1="0" y1="0" x2="0" y2="1"><stop offset="0" stop-color="#fbe7a0"/><stop offset="1" stop-color="#eab93c"/></linearGradient></defs><path d="M1 7h6l2 2.500h9v9.500h-17z" fill="#f2d680" stroke="#d9b95a" stroke-width=".7"/><path d="M1 19.500l4-10h17.500l-4 10z" fill="url(#fo)" stroke="#d2a83a" stroke-width=".7"/><path d="M14 3c3-2.500 6-2 8 1" fill="none" stroke="#2f5fb0" stroke-width="1.400"/><path d="M23 1v4h-4z" fill="#2f5fb0"/></svg>
<div class="t c" style="left:664.5px;top:70px;">File</div>
<svg class="a" style="left:661px;top:83px" width="6" height="4" viewBox="0 0 6 4"><path d="M0.5 0.5h5l-2.5 3z" fill="#333"/></svg>
<svg class="a" style="left:685px;top:44px" width="10" height="11" viewBox="0 0 10 11"><path d="M1 2.500l8-2v7.500l-8 2.500z" fill="#fff" stroke="#222" stroke-width="1.200"/></svg>
<div class="t " style="left:697px;top:45px;">Plane</div>
<svg class="a" style="left:683px;top:59px" width="12" height="12" viewBox="0 0 12 12"><path d="M1 1l10 10" stroke="#222" stroke-width="1.100" stroke-dasharray="2.200 1.300"/></svg>
<div class="t " style="left:697px;top:62px;">Axis</div>
<svg class="a" style="left:684px;top:77px" width="10" height="10" viewBox="0 0 10 10"><path d="M1.500 0v8" stroke="#2a8a8a" stroke-width="1.500"/><path d="M1.500 8l4.500-4" stroke="#222" stroke-width="1.200"/><path d="M1.500 8l7 1.200" stroke="#d03030" stroke-width="1.400"/></svg>
<div class="t " style="left:697px;top:78px;">Origin</div>
<svg class="a" style="left:726px;top:43px" width="10" height="13" viewBox="0 0 10 13"><defs><linearGradient id="cy" x1="0" y1="0" x2="1" y2="0"><stop offset="0" stop-color="#5fa85a"/><stop offset=".4" stop-color="#c4e8c0"/><stop offset="1" stop-color="#5fa85a"/></linearGradient></defs><path d="M.7 3v7c0 3 8.600 3 8.600 0v-7z" fill="url(#cy)" stroke="#2a6a2a" stroke-width="1"/><ellipse cx="5" cy="3" rx="4.300" ry="2.200" fill="#d4f0d0" stroke="#2a6a2a" stroke-width="1"/></svg>
<div class="t " style="left:739px;top:45px;">Cylinder</div>
<svg class="a" style="left:726px;top:60px" width="11" height="11" viewBox="0 0 11 11"><defs><radialGradient id="sp" cx="40%" cy="35%" r="65%"><stop offset="0" stop-color="#b8e8b0"/><stop offset="1" stop-color="#55a552"/></radialGradient></defs><circle cx="5.500" cy="5.500" r="5" fill="url(#sp)" stroke="#2a6a2a" stroke-width=".9"/></svg>
<div class="t " style="left:739px;top:62px;">Sphere</div>
<svg class="a" style="left:725px;top:76px" width="12" height="13" viewBox="0 0 12 13"><path d="M2 1l8 2v8l-8 1.500z" fill="#a8dca0" stroke="#2a7a2a" stroke-width="1"/><path d="M2.500 1.500l7 9.500" stroke="#2a7a2a" stroke-width=".8"/><path d="M1 12l10-11" stroke="#3a2a1a" stroke-width="1.800"/><path d="M1 12l1.200-2.500" stroke="#111" stroke-width="1.800"/></svg>
<div class="t " style="left:739px;top:78px;">Face Curve</div>
<svg class="a" style="left:788px;top:44px" width="11" height="12" viewBox="0 0 11 12"><path d="M.7 3l4.800-2.300 4.800 2.300v6l-4.800 2.500-4.800-2.500z" fill="#e9c48a" stroke="#6a4a1a" stroke-width="1"/><path d="M2.500 3.500l3-1.300 3 1.300v4.500l-3 1.500-3-1.500z" fill="#4ab04a" stroke="#1f6a1f" stroke-width=".7"/><path d="M5.500 3.500v4" stroke="#d8f8d0" stroke-width="1"/></svg>
<div class="t " style="left:801px;top:45px;">Shell</div>
<svg class="a" style="left:787px;top:59px" width="13" height="13" viewBox="0 0 13 13"><path d="M.7 4l4.800-2.300 4.800 2.300v6l-4.800 2.500-4.800-2.500z" fill="#e9c48a" stroke="#6a4a1a" stroke-width="1"/><path d="M3 5l5-2v3.500l-2 1.500v2.500l-3-1.500z" fill="#5ab85a" stroke="#1f6a1f" stroke-width=".7"/><circle cx="10.500" cy="2.500" r="1.800" fill="#f6b83a"/></svg>
<div class="t " style="left:801px;top:62px;">Offset</div>
<svg class="a" style="left:787px;top:75px" width="13" height="14" viewBox="0 0 13 14"><path d="M.7 5l3.500-1.500v8.500l-3.500-1.500z" fill="#6fc86f" stroke="#1f7a1f" stroke-width=".8"/><path d="M4.200 3.500l1 .5v8.500l-1-.5z" fill="#2f8a2f"/><path d="M6.500 4l3.500-1.500v8l-1.500-1.500-2 2.500z" fill="#fff" stroke="#6a4a1a" stroke-width=".9"/><circle cx="10" cy="2" r="1.700" fill="#f6b83a"/></svg>
<div class="t " style="left:801px;top:78px;">Mirror</div>
<svg class="a" style="left:837px;top:44px" width="13" height="13" viewBox="0 0 13 13"><path d="M4 2.500l4-2 4.500 1.500v5.500l-4.500 2-4-1.500z" fill="#c77ae0" stroke="#2a1a5a" stroke-width="1"/><path d="M4 2.500l4 1.500 4.500-2M8 4v5.500" stroke="#2a1a5a" stroke-width=".8" fill="none"/><path d="M.7 6v4.500c0 2 5 2 5 0v-4.500z" fill="#a8dcf0" stroke="#1a3a6a" stroke-width="1"/><ellipse cx="3.200" cy="6" rx="2.500" ry="1.300" fill="#d0f0fa" stroke="#1a3a6a" stroke-width=".9"/></svg>
<div class="t " style="left:851px;top:46px;">Tangent</div>
<svg class="a" style="left:837px;top:60px" width="13" height="13" viewBox="0 0 13 13"><ellipse cx="6.500" cy="8.500" rx="5.800" ry="3.200" fill="#a8dcf0" stroke="#1a2a6a" stroke-width="1"/><path d="M.7 8.500v1.500c0 3.500 11.600 3.500 11.600 0v-1.500" fill="#7ac0e0" stroke="#1a2a6a" stroke-width="1"/><path d="M4 2v6c0 1.500 5 1.500 5 0v-6z" fill="#d07ae0" stroke="#4a1a6a" stroke-width=".9"/><ellipse cx="6.500" cy="2" rx="2.500" ry="1.200" fill="#e8b0f0" stroke="#4a1a6a" stroke-width=".8"/></svg>
<div class="t " style="left:851px;top:62px;">Align</div>
<svg class="a" style="left:837px;top:76px" width="13" height="13" viewBox="0 0 13 13"><path d="M.7 8l5-2.500 4 1.500v2.500l-5 3-4-2z" fill="#7ac8e8" stroke="#1a2a5a" stroke-width="1"/><path d="M3 3l3-2.500 6.500 3.500-3 2.500z" fill="#c77ae0" stroke="#2a1a5a" stroke-width="1"/><path d="M3 3v2l6.500 3.500v-2" fill="#a050c0" stroke="#2a1a5a" stroke-width=".8"/></svg>
<div class="t " style="left:851px;top:78px;">Orient</div>
<svg class="a" style="left:887px;top:44px" width="13" height="12" viewBox="0 0 13 12"><g fill="#eceef2" stroke="#c3c5cc" stroke-width=".9"><path d="M.7 7l4-2 4 1.500v2.500l-4 2-4-1.500z"/><path d="M4 3.500l4-2 4 1.500v3l-4 2-4-1.500z"/><path d="M.7 7l4 1.500 4-2M4 3.500l4 1.500 4-2"/></g></svg>
<div class="t dis" style="left:901px;top:45px;">Rigid</div>
<svg class="a" style="left:888px;top:60px" width="12" height="12" viewBox="0 0 12 12"><g fill="#eceef2" stroke="#c3c5cc" stroke-width=".9"><rect x=".6" y="2" width="4.500" height="8" rx="1.800"/><rect x="6.500" y=".6" width="4.800" height="10.500" rx="2"/><path d="M.6 5.500h4.500"/></g></svg>
<div class="t dis" style="left:901px;top:62px;">Gear</div>
<svg class="a" style="left:888px;top:76px" width="11" height="12" viewBox="0 0 11 12"><g fill="none" stroke="#b4b7c0" stroke-width="1.100"><path d="M5.500 2.500v8.500M1 7c0 3 2.500 4 4.500 4s4.500-1 4.500-4M3.500 4.500h4"/><circle cx="5.500" cy="1.600" r="1.100"/></g></svg>
<div class="t dis" style="left:901px;top:78px;">Anchor</div>
<div class="a" style="left:0px;top:107px;width:1200px;height:535px;background:#d4daef"></div>
<div class="a" style="left:0px;top:107px;width:1200px;height:3px;background:linear-gradient(#eceef5,#d9deef)"></div>
<div class="ph" style="left:2px;top:110px;width:168px;height:13px"></div>
<div class="t " style="left:5px;top:112px;color:#26262b">Structure</div>
<svg class="a" style="left:161px;top:113px" width="6" height="8" viewBox="0 0 6 8"><path d="M1.500 .5h3v3.500h-3zM.5 4h5M3 4v3.500" fill="none" stroke="#33353d" stroke-width="1"/><path d="M3.800 1v3" stroke="#33353d" stroke-width="1"/></svg>
<div class="a" style="left:3px;top:124px;width:166px;height:237px;background:#fff;border-left:1px solid #c4cbe2"></div>
<div class="a" style="left:10px;top:130px;width:7px;height:7px;border:1px solid #a9acb4;background:#fff"></div>
<div class="a" style="left:12px;top:133px;width:3px;height:1px;background:#555"></div>
<div class="a" style="left:22px;top:129px;width:10px;height:10px;border:1px solid #b9bcc6;background:linear-gradient(135deg,#e4e5ea,#f6f6f8)"></div>
<svg class="a" style="left:23px;top:130px" width="7" height="7" viewBox="0 0 7 7"><path d="M1 3.500l2 2 3.500-4.500" fill="none" stroke="#8a8d96" stroke-width="1.400"/></svg>
<svg class="a" style="left:35px;top:127px" width="11" height="13" viewBox="0 0 11 13"><path d="M2 .5h4.500l2.500 2.500v6h-7z" fill="#fff" stroke="#555" stroke-width=".8"/><path d="M.6 9l4-2 5.500 2v2l-5.500 2-4-2z" fill="#e8a868" stroke="#7a4a1a" stroke-width=".8"/><path d="M.6 9l4 1.800 5.500-1.800" fill="none" stroke="#7a4a1a" stroke-width=".7"/></svg>
<div class="t b" style="left:49px;top:129px;color:#111">stl bracket, import</div>
<div class="a" style="left:37px;top:140px;width:10px;height:10px;border:1px solid #8e929c;background:linear-gradient(135deg,#e9eaee,#fff)"></div>
<svg class="a" style="left:38px;top:141px" width="7" height="7" viewBox="0 0 7 7"><path d="M1 3.500l2 2 3.500-4.500" fill="none" stroke="#111" stroke-width="1.400"/></svg>
<svg class="a" style="left:50px;top:140px" width="9" height="11" viewBox="0 0 10 12"><path d="M.7 3l4.300-2.300 4.300 1.800v6.500l-4.300 2.300-4.300-2z" fill="#7fe07f" stroke="#14701c" stroke-width="1.100"/><path d="M.7 3l4.300 1.800 4.300-2.300M5 4.800v6.500" fill="none" stroke="#14701c" stroke-width=".9"/><path d="M1.300 3.500l3.200 1.400v5.300l-3.200-1.500z" fill="#c4f4c4"/></svg>
<div class="t " style="left:64px;top:141px;color:#333">Solid</div>
<div class="a" style="left:37px;top:152px;width:10px;height:10px;border:1px solid #8e929c;background:linear-gradient(135deg,#e9eaee,#fff)"></div>
<svg class="a" style="left:50px;top:152px" width="9" height="11" viewBox="0 0 10 12"><path d="M.7 3l4.300-2.300 4.300 1.800v6.500l-4.300 2.300-4.300-2z" fill="#c9cbd0" stroke="#2a2a2a" stroke-width="1.100"/><path d="M.7 3l4.300 1.800 4.300-2.300M5 4.800v6.500M3 2v7l-2 1.500M3 9l6 .5" fill="none" stroke="#2a2a2a" stroke-width=".8"/></svg>
<div class="t " style="left:64px;top:153px;color:#4a3a4a">Mesh</div>
<div class="ph" style="left:2px;top:366px;width:168px;height:13px"></div>
<div class="t " style="left:5px;top:368px;color:#26262b">Layers</div>
<svg class="a" style="left:161px;top:369px" width="6" height="8" viewBox="0 0 6 8"><path d="M1.500 .5h3v3.500h-3zM.5 4h5M3 4v3.500" fill="none" stroke="#33353d" stroke-width="1"/><path d="M3.800 1v3" stroke="#33353d" stroke-width="1"/></svg>
<div class="a" style="left:3px;top:381px;width:166px;height:243px;background:#fff;border-left:1px solid #c4cbe2"></div>
<div class="a" style="left:4px;top:383px;width:164px;height:16px;background:linear-gradient(#f7f7f9,#ececef 60%,#e2e3e7);border-bottom:1px solid #d5d6dc"></div>
<div class="t b" style="left:6px;top:386px;color:#111">Layer0</div>
<div class="a" style="left:62px;top:383px;width:1px;height:15px;background:#d9dae0"></div>
<div class="a" style="left:90px;top:383px;width:1px;height:15px;background:#d9dae0"></div>
<div class="a" style="left:107px;top:383px;width:1px;height:15px;background:#d9dae0"></div>
<div class="a" style="left:130px;top:383px;width:1px;height:15px;background:#d9dae0"></div>
<div class="a" style="left:66px;top:384px;width:12px;height:12px;background:#8fba90;border:1px solid #a9acb2;box-shadow:inset 0 0 0 1px #dfe6df"></div>
<svg class="a" style="left:82.5px;top:389px" width="6" height="4" viewBox="0 0 6 4"><path d="M0.5 0.5h5l-2.5 3z" fill="#333"/></svg>
<svg class="a" style="left:95px;top:384px" width="10" height="13" viewBox="0 0 10 13"><defs><radialGradient id="bl" cx="45%" cy="35%" r="60%"><stop offset="0" stop-color="#fffbd0"/><stop offset="1" stop-color="#f6d824"/></radialGradient></defs><path d="M5 .7a4.200 4.200 0 0 1 2.500 7.500v2h-5v-2a4.200 4.200 0 0 1 2.500-7.500z" fill="url(#bl)" stroke="#b89a10" stroke-width=".8"/><path d="M3 10.500h4v1.500h-4z" fill="#c9b060" stroke="#8a7a3a" stroke-width=".5"/></svg>
<div class="a" style="left:109px;top:390px;width:13px;height:2px;background:#111"></div>
<svg class="a" style="left:123px;top:389px" width="6" height="4" viewBox="0 0 6 4"><path d="M0.5 0.5h5l-2.5 3z" fill="#333"/></svg>
<div class="a" style="left:132px;top:390px;width:26px;height:1px;background:#222"></div>
<svg class="a" style="left:160.5px;top:389px" width="6" height="4" viewBox="0 0 6 4"><path d="M0.5 0.5h5l-2.5 3z" fill="#333"/></svg>
<div class="a" style="left:1029px;top:110px;width:5px;height:516px;background:#d9def1"></div>
<div class="ph" style="left:1035px;top:110px;width:163px;height:13px"></div>
<div class="t " style="left:1038px;top:112px;color:#26262b">Options - Move</div>
<svg class="a" style="left:1189px;top:113px" width="6" height="8" viewBox="0 0 6 8"><path d="M1.500 .5h3v3.500h-3zM.5 4h5M3 4v3.500" fill="none" stroke="#33353d" stroke-width="1"/><path d="M3.800 1v3" stroke="#33353d" stroke-width="1"/></svg>
<div class="a" style="left:1036px;top:124px;width:161px;height:148px;background:linear-gradient(#f1f3fa,#e6e9f5)"></div>
<div class="a" style="left:1040px;top:157px;width:155px;height:108px;background:#b4b8c8;border-radius:0 0 2px 2px"></div>
<div class="a" style="left:1039px;top:156px;width:155px;height:108px;background:linear-gradient(90deg,#d9dcec,#dfe2f0 50%,#e6e9f4)"></div>
<div class="a" style="left:1039px;top:140px;width:155px;height:16px;background:linear-gradient(90deg,#b4b7c2,#c6c9d3 40%,#e2e5ee 85%,#eceef5)"></div>
<svg class="a" style="left:1041px;top:131px" width="22" height="25" viewBox="0 0 22 25"><path d="M3.500 19v-14" stroke="#2a6a9a" stroke-width="1.800"/><path d="M3.500 19v-14" stroke="#c8ecf8" stroke-width=".7"/><path d="M3.500 1l2.500 6h-5z" fill="#c8ecf8" stroke="#2a6a9a" stroke-width=".8"/><path d="M4 19l7-7" stroke="#3a8a3a" stroke-width="1.600"/><path d="M13.500 9l-1 5-3.500-3z" fill="#c8eab0" stroke="#3a8a3a" stroke-width=".8"/><path d="M4 19.500l11 3.500" stroke="#c03a3a" stroke-width="1.500"/><path d="M20 24.500l-6.500 0 1.500-4z" fill="#f6d4c8" stroke="#c03a3a" stroke-width=".8"/><circle cx="3.800" cy="19.300" r="1.600" fill="#f2f2a0" stroke="#7a8a2a" stroke-width=".7"/></svg>
<div class="t b" style="left:1069px;top:143px;color:#16161a">Move Options</div>
<svg class="a" style="left:1179px;top:142px" width="12" height="12" viewBox="0 0 12 12"><circle cx="6" cy="6" r="5.500" fill="#6a6f98" stroke="#9fa3c4" stroke-width=".8"/><path d="M3.500 5.500l2.500-2.200 2.500 2.200M3.500 8.500l2.500-2.200 2.500 2.200" fill="none" stroke="#fff" stroke-width="1.100"/></svg>
<svg class="a" style="left:1045px;top:160px" width="11" height="11" viewBox="0 0 11 11"><path d="M.7 9.500l3.500-5.500 6 2-3 4.500z" fill="#fff" stroke="#b0b3bd" stroke-width=".9"/><path d="M4.500 1v6M4.500 1l-1.500 2.500h3z" fill="#e8eaf0" stroke="#b0b3bd" stroke-width=".8"/></svg>
<div class="t dis" style="left:1058px;top:161px;">Move grid</div>
<svg class="a" style="left:1045px;top:176px" width="12" height="12" viewBox="0 0 12 12"><path d="M1 11l10-10M11 1l-4 1.500 2.500 2.500zM1 11l4-1.500-2.500-2.500z" fill="#3a5a6a" stroke="#1a2a3a" stroke-width="1"/><path d="M2 2l8 8" stroke="#1a2a3a" stroke-width="1"/></svg>
<svg class="a" style="left:1063px;top:176px" width="12" height="11" viewBox="0 0 12 11"><path d="M.7 3v7.500M11.300 3v7.500M.7 9h10.600M4.500 1v4M7.500 1v4" fill="none" stroke="#a9acb6" stroke-width=".9"/></svg>
<div class="t dis" style="left:1077px;top:177px;">Ruler</div>
<div class="a" style="left:1044px;top:193px;width:9px;height:9px;border:1px solid #b9bcc6;background:linear-gradient(135deg,#e4e5ea,#f6f6f8)"></div>
<div class="t " style="left:1056px;top:193px;">Create patterns</div>
<div class="a" style="left:1056px;top:207px;width:9px;height:9px;border:1px solid #b9bcc6;background:linear-gradient(135deg,#e4e5ea,#f6f6f8)"></div>
<div class="t " style="left:1068px;top:207px;">Maintain orientation</div>
<div class="a" style="left:1044px;top:221px;width:9px;height:9px;border:1px solid #b9bcc6;background:linear-gradient(135deg,#e4e5ea,#f6f6f8)"></div>
<div class="t " style="left:1056px;top:221px;">Detach first</div>
<div class="a" style="left:1044px;top:236px;width:9px;height:9px;border:1px solid #b9bcc6;background:linear-gradient(135deg,#e4e5ea,#f6f6f8)"></div>
<svg class="a" style="left:1045px;top:237px" width="7" height="7" viewBox="0 0 7 7"><path d="M1 3.500l2 2 3.500-4.500" fill="none" stroke="#8a8d96" stroke-width="1.400"/></svg>
<div class="t " style="left:1056px;top:236px;">Maintain sketch connectivity</div>
<div class="t dis" style="left:1043px;top:251px;">Remember orientation</div>
<svg class="a" style="left:1134px;top:250px" width="9" height="10" viewBox="0 0 9 10"><path d="M1.500 0v8" stroke="#2a8a8a" stroke-width="1.400"/><path d="M1.500 8l4-3.500" stroke="#222" stroke-width="1.100"/><path d="M1.500 8l6.500 1.200" stroke="#d03030" stroke-width="1.300"/></svg>
<div class="t " style="left:1145px;top:251px;">Default</div>
<svg class="a" style="left:1175.5px;top:254px" width="6" height="4" viewBox="0 0 6 4"><path d="M0.5 0.5h5l-2.5 3z" fill="#333"/></svg>
<div class="ph" style="left:1035px;top:278px;width:163px;height:13px"></div>
<div class="t " style="left:1038px;top:280px;color:#26262b">Properties</div>
<svg class="a" style="left:1189px;top:281px" width="6" height="8" viewBox="0 0 6 8"><path d="M1.500 .5h3v3.500h-3zM.5 4h5M3 4v3.500" fill="none" stroke="#33353d" stroke-width="1"/><path d="M3.800 1v3" stroke="#33353d" stroke-width="1"/></svg>
<div class="a" style="left:1036px;top:294px;width:161px;height:112px;background:#fff;border:1px solid #c4cbe2"></div>
<div class="a" style="left:1035px;top:406px;width:163px;height:22px;background:linear-gradient(#c3c7d3,#c9ccd8)"></div>
<div class="a" style="left:1038px;top:407px;width:38px;height:16px;background:linear-gradient(#eceef3,#dfe2ea);border:1px solid #a4a8b8;border-top:none;border-radius:0 0 4px 4px"></div>
<div class="t c" style="left:1057.0px;top:411px;color:#26262b">Selection</div>
<div class="a" style="left:1078px;top:407px;width:30px;height:16px;background:linear-gradient(#eceef3,#dfe2ea);border:1px solid #a4a8b8;border-top:none;border-radius:0 0 4px 4px"></div>
<div class="t c" style="left:1093.0px;top:411px;color:#26262b">Groups</div>
<div class="a" style="left:1109px;top:407px;width:42px;height:16px;background:linear-gradient(#fdfdfe,#f4f5f9);border:1px solid #a4a8b8;border-top:none;border-radius:0 0 4px 4px"></div>
<div class="t c" style="left:1130.0px;top:411px;color:#26262b">Properties</div>
<div class="ph" style="left:1035px;top:430px;width:163px;height:13px"></div>
<div class="t " style="left:1038px;top:432px;color:#26262b">Views</div>
<svg class="a" style="left:1189px;top:433px" width="6" height="8" viewBox="0 0 6 8"><path d="M1.500 .5h3v3.500h-3zM.5 4h5M3 4v3.500" fill="none" stroke="#33353d" stroke-width="1"/><path d="M3.800 1v3" stroke="#33353d" stroke-width="1"/></svg>
<div class="a" style="left:1036px;top:446px;width:161px;height:19px;background:linear-gradient(#f0f1fb,#e2e4f3 55%,#c9cce3)"></div>
<svg class="a" style="left:1040px;top:450px" width="11" height="11" viewBox="0 0 11 11"><path d="M4 2l5 2.500v4l-5 2-2-3z" fill="#fff" stroke="#2a4a2a" stroke-width="1"/><path d="M1 .5l3 3M1 3.500l3-3" stroke="#2a8a2a" stroke-width="1.100"/><path d="M9 4v5" stroke="#2a4a2a" stroke-width="1.400"/></svg>
<div class="t " style="left:1052px;top:451px;">Create</div>
<svg class="a" style="left:1084px;top:450px" width="11" height="11" viewBox="0 0 11 11"><path d="M4 2l5 2.500v4l-5 2-2-3z" fill="#f2f3f6" stroke="#b8bbc4" stroke-width="1"/><path d="M1 .5l3 3M1 3.500l3-3" stroke="#b8bbc4" stroke-width="1.100"/><path d="M9 4v5" stroke="#b8bbc4" stroke-width="1.400"/></svg>
<div class="t dis" style="left:1096px;top:451px;">Delete</div>
<div class="a" style="left:1036px;top:465px;width:161px;height:160px;background:#fff"></div>
<div class="a" style="left:1036px;top:466px;width:147px;height:13px;background:linear-gradient(#f6f6f7,#e4e5e8);border-bottom:1px solid #c9cad0"></div>
<div class="a" style="left:1127px;top:467px;width:1px;height:11px;background:#bfc1c8"></div>
<div class="t " style="left:1040px;top:468px;">Name</div>
<div class="t " style="left:1132px;top:468px;">Shortcut</div>
<div class="a" style="left:1183px;top:466px;width:14px;height:159px;background:#f1f1f3;border-left:1px solid #e0e1e6"></div>
<svg class="a" style="left:1186px;top:471px" width="8" height="5" viewBox="0 0 8 5"><path d="M.5 4.500l3.500-4 3.500 4z" fill="#4a4d57"/></svg>
<svg class="a" style="left:1186px;top:615px" width="8" height="5" viewBox="0 0 8 5"><path d="M.5 .5l3.500 4 3.500-4z" fill="#4a4d57"/></svg>
<div class="a" style="left:1184px;top:480px;width:12px;height:98px;background:linear-gradient(90deg,#eef1f6,#dde2ea 50%,#c9d0dc);border:1px solid #98a0b2;border-radius:2px"></div>
<div class="a" style="left:1187px;top:526px;width:6px;height:1px;background:#9a9da8"></div>
<div class="a" style="left:1187px;top:528px;width:6px;height:1px;background:#9a9da8"></div>
<div class="a" style="left:1187px;top:530px;width:6px;height:1px;background:#9a9da8"></div>
<svg class="a" style="left:1058px;top:483px" width="10" height="12" viewBox="0 0 10 12"><path d="M.7 3l4.300-2.300 4.300 1.800v6.500l-4.300 2.300-4.300-2z" fill="#9c9cf0" stroke="#20207a" stroke-width="1"/><path d="M.7 3l4.300 1.800 4.300-2.300z" fill="#3030b8"/><path d="M5 4.800v6.500" stroke="#20207a" stroke-width=".8"/><path d="M1.300 3.600l3.200 1.400v5.300l-3.200-1.500z" fill="#c4c4fa"/></svg>
<div class="t " style="left:1072px;top:484px;color:#33303e">Isometric</div>
<div class="t " style="left:1131px;top:484px;color:#33303e">Ctrl+0</div>
<svg class="a" style="left:1058px;top:497px" width="10" height="12" viewBox="0 0 10 12"><path d="M.7 3l4.300-2.300 4.300 1.800v6.500l-4.300 2.300-4.300-2z" fill="#9c9cf0" stroke="#20207a" stroke-width="1"/><path d="M.7 3l4.300 1.800 4.300-2.300z" fill="#3030b8"/><path d="M5 4.800v6.500" stroke="#20207a" stroke-width=".8"/><path d="M1.300 3.600l3.200 1.400v5.300l-3.200-1.500z" fill="#c4c4fa"/></svg>
<div class="t " style="left:1072px;top:498px;color:#33303e">Trimetric</div>
<div class="t " style="left:1131px;top:498px;color:#33303e">Ctrl+1</div>
<svg class="a" style="left:1058px;top:512px" width="10" height="12" viewBox="0 0 10 12"><path d="M.7 3l4.300-2.300 4.300 1.800v6.500l-4.300 2.300-4.300-2z" fill="#fff" stroke="#20207a" stroke-width="1"/><path d="M.7 3l4.300 1.800 4.300-2.300-4.300-1.800z" fill="#8080e8" stroke="#20207a" stroke-width=".6"/><path d="M.7 3l4.300 1.800 4.300-2.300M5 4.800v6.500M3.200 1.700v6.500l-2.500 1M3.200 8.200l6 .6" fill="none" stroke="#20207a" stroke-width=".7"/></svg>
<div class="t " style="left:1072px;top:513px;color:#33303e">Top</div>
<div class="t " style="left:1131px;top:513px;color:#33303e">Ctrl+2</div>
<svg class="a" style="left:1058px;top:526px" width="10" height="12" viewBox="0 0 10 12"><path d="M.7 3l4.300-2.300 4.300 1.800v6.500l-4.300 2.300-4.300-2z" fill="#fff" stroke="#20207a" stroke-width="1"/><path d="M.7 9l4.300 2.300 4.300-2.300-4.300-1z" fill="#8080e8" stroke="#20207a" stroke-width=".6"/><path d="M.7 3l4.300 1.800 4.300-2.300M5 4.800v6.500M3.200 1.700v6.500l-2.500 1M3.200 8.200l6 .6" fill="none" stroke="#20207a" stroke-width=".7"/></svg>
<div class="t " style="left:1072px;top:527px;color:#33303e">Bottom</div>
<div class="t " style="left:1131px;top:527px;color:#33303e">Ctrl+3</div>
<svg class="a" style="left:1058px;top:540px" width="10" height="12" viewBox="0 0 10 12"><path d="M.7 3l4.300-2.300 4.300 1.800v6.500l-4.300 2.300-4.300-2z" fill="#fff" stroke="#20207a" stroke-width="1"/><path d="M.7 3l2.500-1.300v6.500l-2.500 1z" fill="#8080e8" stroke="#20207a" stroke-width=".6"/><path d="M.7 3l4.300 1.800 4.300-2.300M5 4.800v6.500M3.200 1.700v6.500l-2.500 1M3.200 8.200l6 .6" fill="none" stroke="#20207a" stroke-width=".7"/></svg>
<div class="t " style="left:1072px;top:541px;color:#33303e">Left</div>
<div class="t " style="left:1131px;top:541px;color:#33303e">Ctrl+4</div>
<svg class="a" style="left:1058px;top:554px" width="10" height="12" viewBox="0 0 10 12"><path d="M.7 3l4.300-2.300 4.300 1.800v6.500l-4.300 2.300-4.300-2z" fill="#fff" stroke="#20207a" stroke-width="1"/><path d="M5 4.800l4.300-2.300v6.500l-4.300 2.300z" fill="#8080e8" stroke="#20207a" stroke-width=".6"/><path d="M.7 3l4.300 1.800 4.300-2.300M5 4.800v6.500M3.200 1.700v6.500l-2.500 1M3.200 8.200l6 .6" fill="none" stroke="#20207a" stroke-width=".7"/></svg>
<div class="t " style="left:1072px;top:555px;color:#33303e">Right</div>
<div class="t " style="left:1131px;top:555px;color:#33303e">Ctrl+5</div>
<svg class="a" style="left:1058px;top:569px" width="10" height="12" viewBox="0 0 10 12"><path d="M.7 3l4.300-2.300 4.300 1.800v6.500l-4.300 2.300-4.300-2z" fill="#fff" stroke="#20207a" stroke-width="1"/><path d="M.7 3l4.300 1.800v6.500l-4.300-2z" fill="#8080e8" stroke="#20207a" stroke-width=".6"/><path d="M.7 3l4.300 1.800 4.300-2.300M5 4.800v6.500M3.200 1.700v6.500l-2.500 1M3.200 8.200l6 .6" fill="none" stroke="#20207a" stroke-width=".7"/></svg>
<div class="t " style="left:1072px;top:570px;color:#33303e">Front</div>
<div class="t " style="left:1131px;top:570px;color:#33303e">Ctrl+6</div>
<svg class="a" style="left:1058px;top:583px" width="10" height="12" viewBox="0 0 10 12"><path d="M.7 3l4.300-2.300 4.300 1.800v6.500l-4.300 2.300-4.300-2z" fill="#fff" stroke="#20207a" stroke-width="1"/><path d="M3.200 1.700l6 .8v6.500l-6-.5z" fill="#8080e8" stroke="#20207a" stroke-width=".6"/><path d="M.7 3l4.300 1.800 4.300-2.300M5 4.800v6.500M3.200 1.700v6.500l-2.500 1M3.200 8.200l6 .6" fill="none" stroke="#20207a" stroke-width=".7"/></svg>
<div class="t " style="left:1072px;top:584px;color:#33303e">Back</div>
<div class="t " style="left:1131px;top:584px;color:#33303e">Ctrl+7</div>
<svg class="a" style="left:1057px;top:597px" width="12" height="12" viewBox="0 0 12 12"><path d="M0.500 6.500l5.500-5.500 5.500 5.500" fill="none" stroke="#1a1a1a" stroke-width="1.600"/><path d="M2 6.500v5h8v-5l-4-4z" fill="#fff" stroke="#3434a8" stroke-width="1"/><rect x="4.500" y="7" width="3" height="4" fill="#111"/><path d="M8.500 1v3" stroke="#a33" stroke-width="1.400"/></svg>
<div class="t " style="left:1072px;top:598px;color:#33303e">Home</div>
<div class="t " style="left:1131px;top:598px;color:#33303e">Ctrl+8</div>
<svg class="a" style="left:1057px;top:612px" width="12" height="12" viewBox="0 0 12 12"><path d="M0.500 4c3-4 8-4 11 0c-3 3-8 3-11 0z" fill="#fff" stroke="#222"/><circle cx="6" cy="3.500" r="1.500" fill="#222"/><path d="M2 7h9v5h-9zM2 9.500h9M5 7v5M8 7v5" fill="none" stroke="#444"/></svg>
<div class="t " style="left:1072px;top:613px;color:#33303e">Plan View</div>
<div class="t " style="left:1131px;top:613px;color:#33303e">Ctrl+9</div>
<div class="a" style="left:0px;top:625px;width:1200px;height:17px;background:linear-gradient(#dfe3ec,#d2d6df 22%,#c6cad4 42%,#b0b4bf 52%,#b3b7c1 75%,#bbbec6)"></div>
<div class="t " style="left:5px;top:631px;color:#3c3e46;letter-spacing:-0.3px">Click an object.&nbsp; Double-click to select a chain or loop.&nbsp; Triple-click to select a solid.</div>
<div class="a" style="left:1078px;top:626px;width:70px;height:16px;background:linear-gradient(#eceef3,#dfe2ea)"></div>
<div class="a" style="left:1150px;top:626px;width:36px;height:16px;background:linear-gradient(#eceef3,#dfe2ea)"></div>
<div class="a" style="left:975px;top:627px;width:1px;height:14px;background:#b4b7c2"></div>
<div class="a" style="left:1043px;top:627px;width:1px;height:14px;background:#b4b7c2"></div>
<div class="a" style="left:1077px;top:627px;width:1px;height:14px;background:#b4b7c2"></div>
<div class="a" style="left:1149px;top:627px;width:1px;height:14px;background:#b4b7c2"></div>
<svg class="a" style="left:931px;top:629px" width="13" height="13" viewBox="0 0 13 13"><path d="M8 2a5 5 0 0 1 0 10" fill="none" stroke="#3aa03a" stroke-width="2"/><path d="M1 .5l8 6-3.500 .3 1.800 4-1.800 .9-1.800-4-2.700 2.300z" fill="#111"/></svg>
<svg class="a" style="left:952px;top:629px" width="10" height="13" viewBox="0 0 10 13"><path d="M.7 .7v10l2.400-2.100 1.700 3.900 1.700-.7-1.700-3.900h3.300z" fill="#fff" stroke="#111" stroke-width=".9"/></svg>
<svg class="a" style="left:967px;top:634px" width="6" height="4" viewBox="0 0 6 4"><path d="M.5 3.500h5l-2.500-3z" fill="#333"/></svg>
<svg class="a" style="left:982px;top:629px" width="13" height="13" viewBox="0 0 13 13"><circle cx="6.500" cy="6.500" r="5.800" fill="#d4d6dc" stroke="#c2c4cb"/><circle cx="6.500" cy="6.500" r="3.800" fill="#dfe1e6"/></svg>
<div class="t " style="left:996px;top:631px;color:#b9bcc4;font-size:9.500px">Stop</div>
<svg class="a" style="left:1018px;top:629px" width="11" height="12" viewBox="0 0 11 12"><path d="M5.500 1l5 10h-10z" fill="#dcdde2" stroke="#c6c8cf"/><path d="M5.500 4.500v3.500M5.500 9v1" stroke="#eef" stroke-width="1.200"/></svg>
<svg class="a" style="left:1035px;top:634px" width="6" height="4" viewBox="0 0 6 4"><path d="M.5 3.500h5l-2.500-3z" fill="#b4b7c0"/></svg>
<svg class="a" style="left:1050px;top:629px" width="13" height="13" viewBox="0 0 13 13"><path d="M1 6.500l7-4v8z" fill="#eceef2" stroke="#7a7d88" stroke-width=".9"/><path d="M8 2.500l4 1.500v5l-4 1.500z" fill="#c4c7d0" stroke="#7a7d88" stroke-width=".9"/><path d="M3 6.500h6" stroke="#555" stroke-width=".8"/></svg>
<svg class="a" style="left:1068px;top:634px" width="6" height="4" viewBox="0 0 6 4"><path d="M.5 3.500h5l-2.500-3z" fill="#333"/></svg>
<svg class="a" style="left:1080px;top:629px" width="14" height="12" viewBox="0 0 14 12"><ellipse cx="7" cy="6" rx="4" ry="5" fill="#d9dbe6" stroke="#6e7186" stroke-width="1" transform="rotate(35 7 6)"/><ellipse cx="7" cy="6" rx="7" ry="2.200" fill="none" stroke="#4a4d63" stroke-width="1.200" transform="rotate(-35 7 6)"/></svg>
<svg class="a" style="left:1097px;top:634px" width="6" height="4" viewBox="0 0 6 4"><path d="M.5 3.500h5l-2.500-3z" fill="#333"/></svg>
<svg class="a" style="left:1107px;top:629px" width="14" height="12" viewBox="0 0 14 12"><path d="M1 4l6-3 6 3v2l-5 3-7-3z" fill="#e8a98e" stroke="#b8724f" stroke-width=".7"/><path d="M1 6l7 3 5-3v3l-4 3-8-4z" fill="#c98a6b"/><path d="M9 9l4-2.500v5z" fill="#555"/></svg>
<svg class="a" style="left:1124px;top:628px" width="14" height="13" viewBox="0 0 14 13"><circle cx="5.500" cy="5.500" r="4.500" fill="#d5dcee" stroke="#22232b" stroke-width="1.500"/><path d="M8.500 8.500l3.500 3.500" stroke="#22232b" stroke-width="2"/><circle cx="12" cy="12" r="1.200" fill="#7aa52c"/></svg>
<svg class="a" style="left:1140px;top:634px" width="6" height="4" viewBox="0 0 6 4"><path d="M.5 3.500h5l-2.500-3z" fill="#333"/></svg>
<svg class="a" style="left:1153px;top:629px" width="12" height="12" viewBox="0 0 12 12"><path d="M1 10.500l5-5" stroke="#2a3a8a" stroke-width="1.800"/><path d="M11.500 .5l-2 7.500-5.500-5.500z" fill="#aab6ee" stroke="#2a3a8a" stroke-width=".9"/></svg>
<svg class="a" style="left:1170px;top:629px" width="12" height="12" viewBox="0 0 12 12"><path d="M1 10.500l5-5" stroke="#c4c6ce" stroke-width="1.800"/><path d="M11.500 .5l-2 7.500-5.500-5.500z" fill="#eceef2" stroke="#c4c6ce" stroke-width=".9"/></svg>
<div class="a" style="left:170px;top:107px;width:862px;height:519px;background:linear-gradient(#e6e9f3,#d3d9ee 5px)"></div>
<div class="a" style="left:170px;top:108px;width:862px;height:1px;background:#c6cad8"></div>
<div class="a" style="left:175.5px;top:110.5px;width:855px;height:494px;background:#fff;border-left:1px solid #b9bdca;border-top:1px solid #b9bdca;box-shadow:inset 1.500px 1.500px 0 #f6f1de"></div>
<div class="a" style="left:1016px;top:113px;width:12px;height:477px;background:#f0f0f1;border-left:1px solid #e6e6e9"></div>
<svg class="a" style="left:1019px;top:118px" width="6" height="4" viewBox="0 0 6 4"><path d="M.3 3.700l2.700-3.400 2.700 3.400z" fill="#3c3e46"/></svg>
<svg class="a" style="left:1018.5px;top:576.5px" width="6" height="4" viewBox="0 0 6 4"><path d="M.3 .3l2.700 3.400 2.700-3.400z" fill="#3c3e46"/></svg>
<div class="a" style="left:1016px;top:167px;width:12px;height:403px;background:linear-gradient(90deg,#f0f0f2,#dcdde1 50%,#c4c5ca);border:1px solid #b0b2b8;border-radius:2px"></div>
<div class="a" style="left:1019px;top:366px;width:6px;height:1px;background:#8c8e98"></div>
<div class="a" style="left:1019px;top:368px;width:6px;height:1px;background:#8c8e98"></div>
<div class="a" style="left:1019px;top:370px;width:6px;height:1px;background:#8c8e98"></div>
<div class="a" style="left:176px;top:590px;width:852px;height:13px;background:#efefee;border-top:1px solid #e4e4e6"></div>
<div class="a" style="left:176px;top:590px;width:7px;height:12px;background:#f6f6f6;border-right:1px solid #8a8c94;border-bottom:1px solid #8a8c94"></div>
<svg class="a" style="left:186px;top:594px" width="4" height="6" viewBox="0 0 4 6"><path d="M3.500 .5v5l-3-2.500z" fill="#777a84"/></svg>
<svg class="a" style="left:1006.5px;top:593px" width="4" height="6" viewBox="0 0 4 6"><path d="M.5 .5v5l3-2.500z" fill="#a0a3ac"/></svg>
<div class="a" style="left:1016px;top:585px;width:12px;height:5px;background:#f8f8f8;border-bottom:1.500px solid #5a5c64;border-right:1px solid #8a8c94"></div>
<div class="a" style="left:1016px;top:590px;width:12px;height:13px;background:#f2f2f2"></div>
<div class="a" style="left:1021px;top:591px;width:7px;height:6px;background:#f7b551"></div>
<div class="a" style="left:172px;top:604px;width:858px;height:21px;background:linear-gradient(#c3c7d3,#cacdd9)"></div>
<svg class="a" style="left:173px;top:606px" width="100" height="18" viewBox="0 0 100 18"><path d="M.5 0v12c0 3 2 5 5 5h72c4 0 6-2 8-5l8-12z" fill="#f3f4f8" stroke="#a9adbd" stroke-width=".9"/></svg>
<svg class="a" style="left:176px;top:609px" width="12" height="12" viewBox="0 0 12 12"><path d="M.7 6l3-1.500v-2l4-2 3.500 1.500v6l-5.500 3-5-2z" fill="#f0c890" stroke="#7a4a10" stroke-width="1"/><path d="M.7 6l5 2 2-1v-3l-4-1.500M5.700 8v3.500M7.700 7l3.500-1.500" fill="none" stroke="#7a4a10" stroke-width=".8"/></svg>
<div class="t b" style="left:189px;top:611px;color:#111">stl bracket, import</div>
<svg class="a" style="left:1001.5px;top:610.5px" width="5" height="8" viewBox="0 0 5 8"><path d="M4.500 .5v7l-4-3.500z" fill="none" stroke="#5a5d68" stroke-width=".9"/></svg>
<svg class="a" style="left:1012px;top:610.5px" width="5" height="8" viewBox="0 0 5 8"><path d="M.5 .5v7l4-3.500z" fill="none" stroke="#5a5d68" stroke-width=".9"/></svg>
<svg class="a" style="left:1022.5px;top:611.5px" width="6" height="6" viewBox="0 0 6 6"><path d="M.5 .5l5 5M5.500 .5l-5 5" stroke="#4a4d57" stroke-width="1.200"/></svg>
<div class="a" style="left:941px;top:124px;width:35px;height:36px;background:#fff;border:1.8px solid #949494;border-radius:5px;opacity:1"></div>
<svg class="a" style="left:941px;top:124px" width="35" height="36" viewBox="0 0 35 36"><defs><linearGradient id="ba" x1="0" y1="0" x2="1" y2="1"><stop offset="0" stop-color="#b08850"/><stop offset=".5" stop-color="#96703a"/><stop offset="1" stop-color="#6e4e22"/></linearGradient></defs><path d="M10 5L10.300 25L15.500 20.500L20.500 30.800L24.300 29L19.500 19L26.300 17.300z" fill="none" stroke="#f8d596" stroke-width="3" stroke-linejoin="round" opacity=".85"/><path d="M10 5L10.300 25L15.500 20.500L20.500 30.800L24.300 29L19.500 19L26.300 17.300z" fill="url(#ba)" stroke="#6a4a1e" stroke-width=".9" stroke-linejoin="round"/><path d="M11.500 9v12" stroke="#c8a878" stroke-width="1"/></svg>
<div class="a" style="left:982px;top:124px;width:24px;height:24px;background:#fff;border:1.2px solid #949494;border-radius:5px;opacity:1"></div>
<svg class="a" style="left:982px;top:124px" width="24" height="24" viewBox="0 0 24 24"><path d="M3.500 3.500l7 5-2.800 .3 1.600 3.500-1.600 .8-1.600-3.500-2.400 2z" fill="#8e8e8e" stroke="#6a6a6a" stroke-width=".5"/><path d="M10 12.500l4.500-2 5.500 1.800v6.200l-5.500 2.800-4.500-2z" fill="#f8d8b8" stroke="#e04a3a" stroke-width=".9"/><path d="M14.500 14.500l5.500-2.200v6.200l-5.500 2.800z" fill="#f0a088"/><path d="M10 12.500l4.500 2 5.500-2.200M14.500 14.500v6.800" fill="none" stroke="#e04a3a" stroke-width=".8"/><ellipse cx="15" cy="16" rx="6.200" ry="6" fill="none" stroke="#f09080" stroke-width=".6" stroke-dasharray="1.500 1"/></svg>
<div class="a" style="left:952px;top:171px;width:24px;height:24px;background:#fff;border:1.2px solid #949494;border-radius:5px;opacity:1"></div>
<svg class="a" style="left:952px;top:171px" width="24" height="24" viewBox="0 0 24 24"><path d="M3.800 20.200l9-9.200" stroke="#4a7a8a" stroke-width="2.400"/><path d="M3.800 20.200l9-9.200" stroke="#cdeef6" stroke-width="1.200"/><path d="M20.500 3.500l-5.500 9.700-1.800-2.600-2.700-2z" fill="#cdeef6" stroke="#4a7a8a" stroke-width=".8" stroke-linejoin="round"/></svg>
<div class="a" style="left:982px;top:171px;width:24px;height:24px;background:#fff;border:1.2px solid #949494;border-radius:5px;opacity:1"></div>
<svg class="a" style="left:982px;top:171px" width="24" height="24" viewBox="0 0 24 24"><path d="M3.500 20c1-4 4-2 6.500-3s3.500-2.500 4.500-4.500" fill="none" stroke="#4a7a8a" stroke-width="2.400"/><path d="M3.500 20c1-4 4-2 6.500-3s3.500-2.500 4.500-4.500" fill="none" stroke="#cdeef6" stroke-width="1.200"/><path d="M21 4l-2.800 9.500-2-2.200-2.800-.6z" fill="#cdeef6" stroke="#4a7a8a" stroke-width=".8" stroke-linejoin="round"/></svg>
<div class="a" style="left:982px;top:218px;width:24px;height:24px;background:#fff;border:1.2px solid #949494;border-radius:5px;opacity:1"></div>
<svg class="a" style="left:985px;top:221px" width="19" height="19" viewBox="0 0 19 19"><path d="M4.500 12.500l4-8" stroke="#3a8a3a" stroke-width="1.200"/><path d="M9.500 1l.5 5-3.500-1.500z" fill="#d0f0c8" stroke="#3a8a3a" stroke-width=".7"/><path d="M5 13l8 3.500" stroke="#d04040" stroke-width="1.200"/><path d="M17.500 18l-5.500-.5 1.500-3.500z" fill="#f8d8d0" stroke="#d04040" stroke-width=".7"/><circle cx="4.500" cy="12.500" r="2.600" fill="#f0f040" stroke="#8a8a1a" stroke-width=".8"/></svg>
<div class="a" style="left:982px;top:266px;width:24px;height:24px;background:#fff;border:1.2px solid #949494;border-radius:5px;opacity:1"></div>
<svg class="a" style="left:985px;top:269px" width="19" height="19" viewBox="0 0 19 19"><path d="M6 9l7 2 2.500 6-5 1.500-7-2z" fill="#8fdcdc" stroke="#2a7a8a" stroke-width=".8"/><path d="M10.500 11.500v7M6 9l4.500 2.500 5-0" fill="none" stroke="#2a7a8a" stroke-width=".6"/><path d="M1 4.500l5-3 12 4.500v3.500l-5 2.500-12-4z" fill="#e09860" stroke="#8a4a1a" stroke-width=".8"/><path d="M1 4.500l12 4 5-2.500M13 8.500v3.500" fill="none" stroke="#8a4a1a" stroke-width=".7"/><path d="M1.500 4.600l4.500-2.600 11.500 4.200-4.500 2.200z" fill="#f0b888"/></svg>
<div class="a" style="left:952px;top:313px;width:24px;height:24px;background:#fff;border:1.200px solid #e8e8e8;border-radius:5px"></div>
<svg class="a" style="left:956px;top:317px" width="16" height="16" viewBox="0 0 16 16"><path d="M1 1l5 4-2 .5 4 4-1 1-4-4-1 2z M8 8h6v6h-6z" fill="#efefef"/></svg>
<div class="a" style="left:982px;top:313px;width:24px;height:24px;background:#fff;border:1.200px solid #e8e8e8;border-radius:5px"></div>
<svg class="a" style="left:986px;top:316px" width="16" height="18" viewBox="0 0 16 18"><path d="M5 1h7v6h-7z M3 9l4 2 2 5-3 1z M9 8l2 6" fill="#efefef" stroke="#ececec"/></svg>
<svg class="a" style="left:727px;top:314px" width="10" height="15" viewBox="0 0 10 15"><path d="M.7 .7v11l2.600-2.300 1.800 4.300 1.800-.8-1.800-4.200h3.500z" fill="#fff" stroke="#333" stroke-width=".9"/></svg>
<svg class="a" style="left:0;top:0" width="1200" height="642" viewBox="0 0 1200 642">
<defs>
<linearGradient id="cyl" gradientUnits="userSpaceOnUse" x1="590" y1="170" x2="640" y2="295">
<stop offset="0" stop-color="#9dc19b"/><stop offset=".12" stop-color="#a4c8a2"/><stop offset=".3" stop-color="#9fc39d"/><stop offset=".5" stop-color="#a3c7a1"/><stop offset=".66" stop-color="#9bbf99"/><stop offset=".78" stop-color="#a1c59f"/><stop offset="1" stop-color="#95b893"/></linearGradient>
<linearGradient id="hole" gradientUnits="userSpaceOnUse" x1="535" y1="245" x2="572" y2="298">
<stop offset="0" stop-color="#a6caa4"/><stop offset=".5" stop-color="#9cbf9a"/><stop offset="1" stop-color="#86aa84"/></linearGradient>
</defs>
<g stroke="#2b4a2b" stroke-width=".8" stroke-linejoin="round">
<!-- base top -->
<path d="M341.500 381.400L585.700 279.100L748.200 358L504 460.300z" fill="#9cbf9a"/>
<!-- base left-front -->
<path d="M341.500 381.400L504 460.300L503.500 516L341.500 437.500z" fill="#96b994"/>
<!-- base right-front -->
<path d="M504 460.300L748.200 358L748.200 414L503.500 516z" fill="#92b590"/>
<!-- slope face (under) -->
<path d="M435 344.700L507.400 256.500L560 250L625.500 291L597.700 421.800z" fill="#97ba95" stroke="none"/>
<path d="M507.400 256.500L435 344.700L597.700 421.800" fill="none"/>
<!-- cylinder body -->
<path d="M529.400 211L647.900 163.600A43 65 -21.800 0 1 711.900 207.900A43 65 -21.800 0 1 696.100 284.300L577.600 331.600z" fill="url(#cyl)" stroke="none"/>
<path d="M529.400 211L647.900 163.600A43 65 -21.800 0 1 711.900 207.900A43 65 -21.800 0 1 696.100 284.300L681 290.300" fill="none"/>
<!-- slope face (over) -->
<path d="M604.600 320.900Q619 311 625.800 293L597.700 421.800L500 375.500L577.600 331.600z" fill="#97ba95" stroke="none"/>
<path d="M604.600 320.900Q619 311 625.800 293" fill="none"/>
<path d="M435 344.700L597.700 421.800" fill="none"/>
<!-- upright side -->
<path d="M625.800 293L686.700 269.100L657.800 396L597.700 421.800z" fill="#94b792"/>
<!-- cylinder front face -->
<ellipse cx="553.500" cy="271.300" rx="43" ry="65" transform="rotate(-21.800 553.500 271.300)" fill="#9dc09b"/>
<ellipse cx="553.200" cy="271.600" rx="21" ry="31.800" transform="rotate(-21.800 553.200 271.600)" fill="url(#hole)"/>
</g>
<!-- axes -->
<path d="M463.200 387L463.800 332" stroke="#2f9a3a" stroke-width="1.500"/><path d="M463.900 322l2.300 11.500h-4.600z" fill="#2f8a44"/>
<path d="M463 387l44-17.700" stroke="#d4523c" stroke-width="1.900"/><path d="M516 365.200l-10.500 1.400 2 5z" fill="#b8523c"/>
<path d="M463 387l42 19.200" stroke="#6a9ad4" stroke-width="1.900"/><path d="M513.300 410.300l-10.500-1.800 2.200-4.800z" fill="#5a7ab8"/>
<circle cx="462.800" cy="387" r="1.300" fill="#667"/>
<g font-family="Liberation Sans, sans-serif" font-weight="bold" font-size="7" text-anchor="middle">
<text x="464.700" y="315.300" fill="#3a9a4a" font-size="6.500">Y</text>
<text x="522" y="365" fill="#d8503a">X</text>
<text x="519.500" y="417" fill="#3a4ab0">Z</text>
</g>
</svg>
</div>
</body></html>
